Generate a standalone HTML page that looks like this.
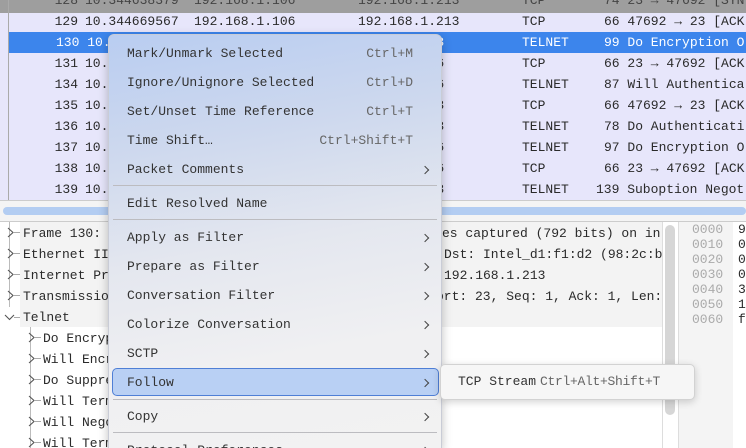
<!DOCTYPE html>
<html style="overflow:hidden;width:746px;height:448px"><head><meta charset="utf-8"><style>
*{margin:0;padding:0;box-sizing:border-box}
body{width:746px;height:448px;overflow:hidden;position:relative;background:#fff;font-family:"Liberation Mono",monospace;font-size:13px;color:#2a2a2a}
.abs{position:absolute;white-space:pre}
#list{position:absolute;left:0;top:0;width:746px;height:200px;background:#e7e6fb;overflow:hidden}
.row{position:absolute;left:0;width:746px;height:21px;line-height:21px}
.row span{position:absolute;white-space:pre}
.no{right:668px;text-align:right}
#det{position:absolute;left:0;top:222px;width:662px;height:226px;background:#fff;overflow:hidden}
.d{position:absolute;height:21px;line-height:21px;white-space:pre}
#menu{position:absolute;left:108px;top:34px;width:334px;height:414px;border-radius:6px 6px 0 0;border:1px solid #c9ccd6;border-bottom:none;background:linear-gradient(170deg,#b9cdf1 0%,#cdd8ee 25%,#e4e7ef 50%,#f0f0f2 75%,#f2f2f2 100%);box-shadow:0 3px 10px rgba(0,0,0,.25);overflow:hidden}
.mi{position:absolute;left:18px;height:20px;line-height:20px;white-space:pre;color:#333}
.sc{position:absolute;right:28px;height:20px;line-height:20px;color:#666;white-space:pre}
.ar{position:absolute;left:313px;width:6px;height:6px;border-right:1.3px solid #444;border-top:1.3px solid #444;transform:rotate(45deg)}
.sep{position:absolute;left:4px;right:4px;height:1px;background:#bcbcc0}
</style></head><body>
<div id="list">
 <div style="position:absolute;left:0;top:0;width:746px;height:13px;background:#9e9e9e"></div>
 <div style="position:absolute;left:8px;top:0;width:1px;height:200px;background:#aaa"></div>
 <div class="row" style="top:-10px;color:#444"><span class="no">128</span><span style="left:85px">10.344638379</span><span style="left:194px">192.168.1.106</span><span style="left:358px">192.168.1.213</span><span style="left:522px">TCP</span><span style="left:604px">74 23 → 47692 [SYN</span></div>
 <div class="row" style="top:11px"><span class="no">129</span><span style="left:85px">10.344669567</span><span style="left:194px">192.168.1.106</span><span style="left:358px">192.168.1.213</span><span style="left:522px">TCP</span><span style="left:604px">66 47692 → 23 [ACK</span></div>
 <div class="row" style="top:32px;background:#3c85ec;color:#fff;left:9px"><span style="left:47px">130 10.</span><span style="left:404px">.213</span><span style="left:513px">TELNET</span><span style="left:595px">99 Do Encryption O</span></div>
 <div class="row" style="top:53px"><span class="no">131</span><span style="left:85px">10.</span><span style="left:413px">.106</span><span style="left:522px">TCP</span><span style="left:604px">66 23 → 47692 [ACK</span></div>
 <div class="row" style="top:74px"><span class="no">134</span><span style="left:85px">10.</span><span style="left:413px">.106</span><span style="left:522px">TELNET</span><span style="left:604px">87 Will Authentica</span></div>
 <div class="row" style="top:95px"><span class="no">135</span><span style="left:85px">10.</span><span style="left:413px">.213</span><span style="left:522px">TCP</span><span style="left:604px">66 47692 → 23 [ACK</span></div>
 <div class="row" style="top:116px"><span class="no">136</span><span style="left:85px">10.</span><span style="left:413px">.213</span><span style="left:522px">TELNET</span><span style="left:604px">78 Do Authenticati</span></div>
 <div class="row" style="top:137px"><span class="no">137</span><span style="left:85px">10.</span><span style="left:413px">.106</span><span style="left:522px">TELNET</span><span style="left:604px">97 Do Encryption O</span></div>
 <div class="row" style="top:158px"><span class="no">138</span><span style="left:85px">10.</span><span style="left:413px">.106</span><span style="left:522px">TCP</span><span style="left:604px">66 23 → 47692 [ACK</span></div>
 <div class="row" style="top:179px"><span class="no">139</span><span style="left:85px">10.</span><span style="left:413px">.213</span><span style="left:522px">TELNET</span><span style="left:596px">139 Suboption Negot</span></div>
</div>
<div style="position:absolute;left:0;top:200px;width:746px;height:22px;background:#f4f4f4;border-top:1px solid #ccc;border-bottom:1px solid #ccc"></div>
<div style="position:absolute;left:3px;top:207px;width:743px;height:8px;border-radius:4px;background:#b3cdf2"></div>
<div id="det">
 <div style="position:absolute;left:20px;top:0;width:642px;height:105px;background:#f3f3f3"></div>
 <div style="position:absolute;left:9px;top:0;width:1px;height:85px;background:#bbb"></div>
 <div style="position:absolute;left:30px;top:105px;width:1px;height:121px;background:#bbb"></div>
 <div class="d" style="left:23px;top:1px">Frame 130: </div>
 <div class="d" style="left:23px;top:22px">Ethernet II</div>
 <div class="d" style="left:23px;top:43px">Internet Pr</div>
 <div class="d" style="left:23px;top:64px">Transmissio</div>
 <div class="d" style="left:23px;top:85px">Telnet</div>
 <div class="d" style="left:43px;top:106px">Do Encryp</div>
 <div class="d" style="left:43px;top:127px">Will Encr</div>
 <div class="d" style="left:43px;top:148px">Do Suppre</div>
 <div class="d" style="left:43px;top:169px">Will Term</div>
 <div class="d" style="left:43px;top:190px">Will Nego</div>
 <div class="d" style="left:43px;top:211px">Will Term</div>
 <div class="d" style="left:442px;top:1px">es captured (792 bits) on in</div>
 <div class="d" style="left:444px;top:22px">Dst: Intel_d1:f1:d2 (98:2c:b</div>
 <div class="d" style="left:444px;top:43px">192.168.1.213</div>
 <div class="d" style="left:436px;top:64px">ort: 23, Seq: 1, Ack: 1, Len:</div>
</div>
<svg class="abs" style="left:0;top:222px" width="60" height="226">
 <g fill="none" stroke="#555" stroke-width="1.1">
  <path d="M8 6l5 4.5-5 4.5M8 27l5 4.5-5 4.5M8 48l5 4.5-5 4.5M8 69l5 4.5-5 4.5M5 93l4.5 4.5 4.5-4.5"/>
  <path d="M29 111l5 4.5-5 4.5M29 132l5 4.5-5 4.5M29 153l5 4.5-5 4.5M29 174l5 4.5-5 4.5M29 195l5 4.5-5 4.5M29 216l5 4.5-5 4.5"/>
 </g>
 <g stroke="#aaa"><path d="M14 10.5h6M14 31.5h6M14 52.5h6M14 73.5h6M14 95.5h6M35 115.5h6M35 136.5h6M35 157.5h6M35 178.5h6M35 199.5h6M35 220.5h6"/></g>
</svg>
<div style="position:absolute;left:662px;top:222px;width:1px;height:226px;background:#ddd"></div>
<div style="position:absolute;left:678px;top:222px;width:1px;height:226px;background:#ddd"></div>
<div style="position:absolute;left:665px;top:225px;width:10px;height:190px;border-radius:5px;background:#d6d6d6"></div>
<div style="position:absolute;left:679px;top:222px;width:54px;height:226px;background:#f4f4f4"></div>
<div class="abs" style="left:692px;top:222px;line-height:15px;color:#aaa">0000
0010
0020
0030
0040
0050
0060</div>
<div class="abs" style="left:738px;top:222px;line-height:15px">9
0
0
0
3
1
f</div>
<div id="menu">
 <div class="mi" style="top:9px">Mark/Unmark Selected</div><div class="sc" style="top:9px">Ctrl+M</div>
 <div class="mi" style="top:38px">Ignore/Unignore Selected</div><div class="sc" style="top:38px">Ctrl+D</div>
 <div class="mi" style="top:67px">Set/Unset Time Reference</div><div class="sc" style="top:67px">Ctrl+T</div>
 <div class="mi" style="top:96px">Time Shift…</div><div class="sc" style="top:96px">Ctrl+Shift+T</div>
 <div class="mi" style="top:125px">Packet Comments</div><div class="ar" style="top:132px"></div>
 <div class="sep" style="top:150px"></div>
 <div class="mi" style="top:159px">Edit Resolved Name</div>
 <div class="sep" style="top:184px"></div>
 <div class="mi" style="top:193px">Apply as Filter</div><div class="ar" style="top:200px"></div>
 <div class="mi" style="top:222px">Prepare as Filter</div><div class="ar" style="top:229px"></div>
 <div class="mi" style="top:251px">Conversation Filter</div><div class="ar" style="top:258px"></div>
 <div class="mi" style="top:280px">Colorize Conversation</div><div class="ar" style="top:287px"></div>
 <div class="mi" style="top:309px">SCTP</div><div class="ar" style="top:316px"></div>
 <div style="position:absolute;left:3px;top:333px;width:327px;height:28px;border:1px solid #4f7fd6;border-radius:5px;background:#b9d0f4"></div>
 <div class="mi" style="top:338px">Follow</div><div class="ar" style="top:345px"></div>
 <div class="sep" style="top:364px"></div>
 <div class="mi" style="top:372px">Copy</div><div class="ar" style="top:379px"></div>
 <div class="sep" style="top:397px"></div>
 <div class="mi" style="top:406px">Protocol Preferences</div><div class="ar" style="top:413px"></div>
</div>
<div style="position:absolute;left:440px;top:364px;width:255px;height:36px;border:1px solid #d2d2d2;border-radius:5px;background:#f6f6f6;box-shadow:0 2px 8px rgba(0,0,0,.18)"></div>
<div class="abs" style="left:458px;top:372px;line-height:20px;color:#333">TCP Stream</div>
<div class="abs" style="left:540px;top:372px;line-height:20px;color:#666;letter-spacing:-0.3px">Ctrl+Alt+Shift+T</div>
</body></html>
